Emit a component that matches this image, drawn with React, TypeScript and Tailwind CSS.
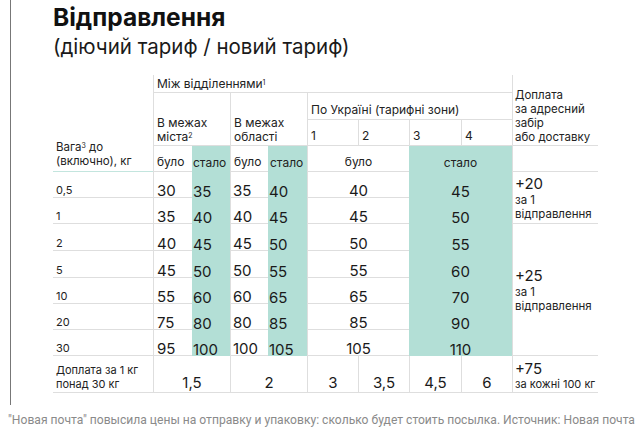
import React from "react";

const weights = ["0,5", "1", "2", "5", "10", "20", "30"];
const cityOld = [30, 35, 40, 45, 55, 75, 95];
const cityNew = [35, 40, 45, 50, 60, 80, 100];
const regOld = [35, 40, 45, 50, 60, 80, 100];
const regNew = [40, 45, 50, 55, 65, 85, 105];
const zoneOld = [40, 45, 50, 55, 65, 85, 105];
const zoneNew = [45, 50, 55, 60, 70, 90, 110];
const rowStarts = [
  "row-start-5",
  "row-start-6",
  "row-start-7",
  "row-start-8",
  "row-start-9",
  "row-start-10",
  "row-start-11",
];

const line = "border-[#dedede]";
const tealLine = "border-[#c3e5de]";
const teal = "bg-[#b3dfd6]";
const num = "flex items-end text-[15px] leading-[12px] text-[#1a1a1a]";
const small = "text-[11px] leading-[14px] text-[#222]";
const head = "text-[12px] leading-[14px] text-[#222]";
const note = "text-[11.5px] leading-[14px] text-[#222]";

export default function App() {
  return (
    <div className="w-[644px] h-[439px] overflow-hidden bg-white font-['Inter',sans-serif]">
      <div className="ml-[10px] h-[405px] border-l border-[#777] pl-[42px] pt-[4px]">
        <h1 className="text-[24.5px] leading-[26px] font-bold text-[#111]">Відправлення</h1>
        <p className="mt-[5px] text-[20.5px] leading-[24px] text-[#1a1a1a]">(діючий тариф / новий тариф)</p>

        <div className="mt-[16px] grid grid-cols-[100px_39px_38px_38px_39px_51px_51px_52px_51px_86px] grid-rows-[18px_27px_26px_26px_26px_26px_27px_27px_26px_26px_26px_37px] w-[545px]">
          {/* Weight header */}
          <div className={`col-start-1 row-start-1 row-span-4 flex items-end pb-[3px] pl-[3px] border-b ${tealLine} ${note}`}>
            <span>
              Вага<sup className="text-[7px]">3</sup> до
              <br />
              (включно), кг
            </span>
          </div>
          {/* Між відділеннями */}
          <div className={`col-start-2 col-span-8 row-start-1 flex items-end pb-[1px] pl-[3px] border-l ${line} border-b ${tealLine} ${head}`}>
            <span>
              Між відділеннями<sup className="text-[7px]">1</sup>
            </span>
          </div>
          {/* Доплата header */}
          <div className={`col-start-10 row-start-1 row-span-3 flex items-end pb-[1px] pl-[2px] border-l ${line} border-b ${tealLine} ${note}`}>
            <span>
              Доплата
              <br />
              за адресний
              <br />
              забір
              <br />
              або доставку
            </span>
          </div>
          {/* В межах міста */}
          <div className={`col-start-2 col-span-2 row-start-2 row-span-2 flex items-end pb-[1px] pl-[3px] border-l ${line} border-b ${tealLine} ${head}`}>
            <span>
              В межах
              <br />
              міста<sup className="text-[7px]">2</sup>
            </span>
          </div>
          <div className={`col-start-4 col-span-2 row-start-2 row-span-2 flex items-end pb-[1px] pl-[3px] border-l ${line} border-b ${tealLine} ${head}`}>
            <span>
              В межах
              <br />
              області
            </span>
          </div>
          <div className={`col-start-6 col-span-4 row-start-2 flex items-end pb-[2px] pl-[3px] border-l ${line} border-b ${tealLine} ${head}`}>
            По Україні (тарифні зони)
          </div>
          <div className={`col-start-6 row-start-3 flex items-end pb-[2px] pl-[3px] border-l ${line} border-b ${tealLine} ${head}`}>1</div>
          <div className={`col-start-7 row-start-3 flex items-end pb-[2px] pl-[3px] border-l ${line} border-b ${tealLine} ${head}`}>2</div>
          <div className={`col-start-8 row-start-3 flex items-end pb-[2px] pl-[3px] border-l ${line} border-b ${tealLine} ${head}`}>3</div>
          <div className={`col-start-9 row-start-3 flex items-end pb-[2px] pl-[3px] border-l ${line} border-b ${tealLine} ${head}`}>4</div>

          {/* було / стало */}
          <div className={`col-start-2 row-start-4 flex items-end pb-[2px] pl-[3px] border-l ${line} border-b ${tealLine} ${head}`}>було</div>
          <div className={`col-start-3 row-start-4 flex items-end pb-[2px] pl-[1px] ${teal} ${head}`}>стало</div>
          <div className={`col-start-4 row-start-4 flex items-end pb-[2px] pl-[3px] border-l ${line} border-b ${tealLine} ${head}`}>було</div>
          <div className={`col-start-5 row-start-4 flex items-end pb-[2px] pl-[2px] ${teal} ${head}`}>стало</div>
          <div className={`col-start-6 col-span-2 row-start-4 flex items-end justify-center pb-[2px] border-l ${line} border-b ${tealLine} ${head}`}>було</div>
          <div className={`col-start-8 col-span-2 row-start-4 flex items-end justify-center pb-[2px] ${teal} ${head}`}>стало</div>
          <div className={`col-start-10 row-start-4 border-l ${line} border-b ${line}`}></div>

          {/* data rows */}
          {weights.map((w, i) => (
            <React.Fragment key={w}>
              <div className={`col-start-1 ${rowStarts[i]} flex items-end pb-[1px] pl-[3px] border-b ${line} text-[11px] leading-[11px] text-[#222]`}>{w}</div>
              <div className={`col-start-2 ${rowStarts[i]} pl-[3px] border-l ${line} border-b ${num}`}>{cityOld[i]}</div>
              <div className={`col-start-3 ${rowStarts[i]} pl-[1px] ${teal} ${num}`}>{cityNew[i]}</div>
              <div className={`col-start-4 ${rowStarts[i]} pl-[2px] border-l ${line} border-b ${num}`}>{regOld[i]}</div>
              <div className={`col-start-5 ${rowStarts[i]} pl-[1px] ${teal} ${num}`}>{regNew[i]}</div>
              <div className={`col-start-6 col-span-2 ${rowStarts[i]} justify-center border-l ${line} border-b ${num}`}>{zoneOld[i]}</div>
              <div className={`col-start-8 col-span-2 ${rowStarts[i]} justify-center ${teal} ${num}`}>{zoneNew[i]}</div>
            </React.Fragment>
          ))}

          <div className={`col-start-10 row-start-5 row-span-2 flex flex-col justify-center pl-[2px] border-l ${line} border-b`}>
            <span className="text-[15px] leading-[18px] text-[#1a1a1a]">+20</span>
            <span className={note}>за 1</span>
            <span className={note}>відправлення</span>
          </div>
          <div className={`col-start-10 row-start-7 row-span-5 flex flex-col justify-center pl-[2px] border-l ${line} border-b`}>
            <span className="text-[15px] leading-[18px] text-[#1a1a1a]">+25</span>
            <span className={note}>за 1</span>
            <span className={note}>відправлення</span>
          </div>

          {/* footer */}
          <div className={`col-start-1 row-start-12 flex items-end pb-[1px] pl-[3px] border-b ${line} ${small}`}>
            <span>
              Доплата за 1 кг
              <br />
              понад 30 кг
            </span>
          </div>
          <div className={`col-start-2 col-span-2 row-start-12 justify-center pb-[3px] border-l ${line} border-b ${num}`}>1,5</div>
          <div className={`col-start-4 col-span-2 row-start-12 justify-center pb-[3px] border-l ${line} border-b ${num}`}>2</div>
          <div className={`col-start-6 row-start-12 justify-center pb-[3px] border-l ${line} border-b ${num}`}>3</div>
          <div className={`col-start-7 row-start-12 justify-center pb-[3px] border-l ${line} border-b ${num}`}>3,5</div>
          <div className={`col-start-8 row-start-12 justify-center pb-[3px] border-l ${line} border-b ${num}`}>4,5</div>
          <div className={`col-start-9 row-start-12 justify-center pb-[3px] border-l ${line} border-b ${num}`}>6</div>
          <div className={`col-start-10 row-start-12 flex flex-col justify-end pb-[1px] pl-[2px] border-l ${line} border-b`}>
            <span className="text-[15px] leading-[18px] text-[#1a1a1a]">+75</span>
            <span className="text-[11px] leading-[13px] text-[#222]">за кожні 100 кг</span>
          </div>
        </div>
      </div>
      <p className="mt-[7px] pl-[8px] font-['Roboto',sans-serif] text-[12.1px] leading-[16px] text-[#8a8a8a] whitespace-nowrap">
        "Новая почта" повысила цены на отправку и упаковку: сколько будет стоить посылка. Источник: Новая почта
      </p>
    </div>
  );
}
